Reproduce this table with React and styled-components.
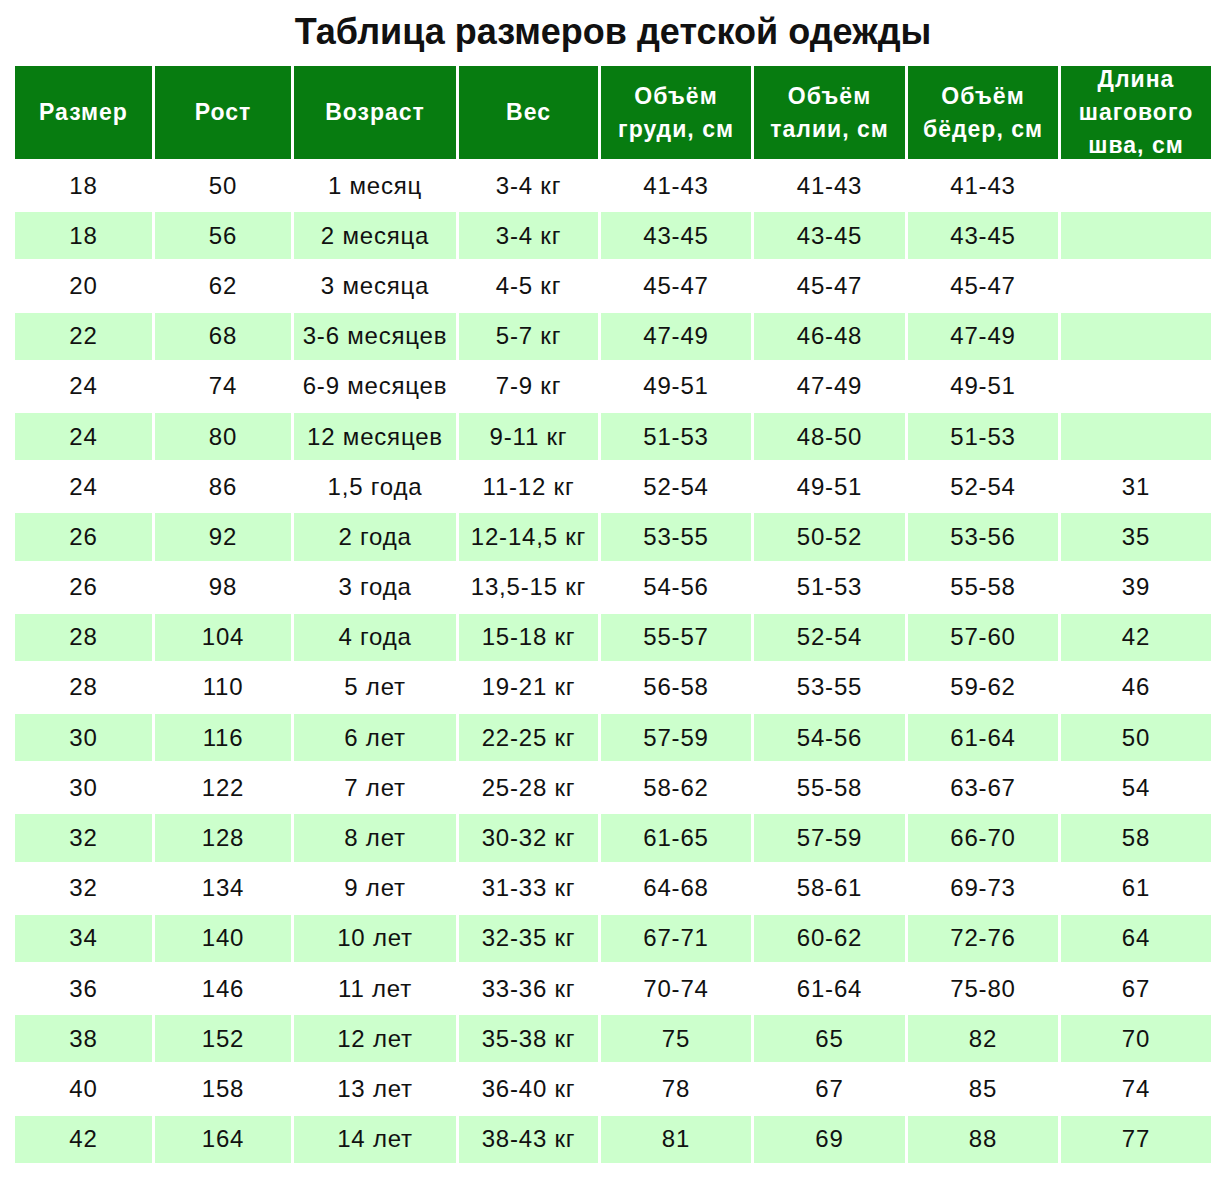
import styled, { createGlobalStyle } from "styled-components";

const GlobalStyle = createGlobalStyle`
    body {
        margin: 0;
        background: #FFFFFF;
        font-family: 'Liberation Sans', Arial, sans-serif;
    }
`;

const headers = [
    "Размер",
    "Рост",
    "Возраст",
    "Вес",
    "Объём\nгруди, см",
    "Объём\nталии, см",
    "Объём\nбёдер, см",
    "Длина\nшагового\nшва, см",
];

const rows = [
    ["18", "50", "1 месяц", "3-4 кг", "41-43", "41-43", "41-43", ""],
    ["18", "56", "2 месяца", "3-4 кг", "43-45", "43-45", "43-45", ""],
    ["20", "62", "3 месяца", "4-5 кг", "45-47", "45-47", "45-47", ""],
    ["22", "68", "3-6 месяцев", "5-7 кг", "47-49", "46-48", "47-49", ""],
    ["24", "74", "6-9 месяцев", "7-9 кг", "49-51", "47-49", "49-51", ""],
    ["24", "80", "12 месяцев", "9-11 кг", "51-53", "48-50", "51-53", ""],
    ["24", "86", "1,5 года", "11-12 кг", "52-54", "49-51", "52-54", "31"],
    ["26", "92", "2 года", "12-14,5 кг", "53-55", "50-52", "53-56", "35"],
    ["26", "98", "3 года", "13,5-15 кг", "54-56", "51-53", "55-58", "39"],
    ["28", "104", "4 года", "15-18 кг", "55-57", "52-54", "57-60", "42"],
    ["28", "110", "5 лет", "19-21 кг", "56-58", "53-55", "59-62", "46"],
    ["30", "116", "6 лет", "22-25 кг", "57-59", "54-56", "61-64", "50"],
    ["30", "122", "7 лет", "25-28 кг", "58-62", "55-58", "63-67", "54"],
    ["32", "128", "8 лет", "30-32 кг", "61-65", "57-59", "66-70", "58"],
    ["32", "134", "9 лет", "31-33 кг", "64-68", "58-61", "69-73", "61"],
    ["34", "140", "10 лет", "32-35 кг", "67-71", "60-62", "72-76", "64"],
    ["36", "146", "11 лет", "33-36 кг", "70-74", "61-64", "75-80", "67"],
    ["38", "152", "12 лет", "35-38 кг", "75", "65", "82", "70"],
    ["40", "158", "13 лет", "36-40 кг", "78", "67", "85", "74"],
    ["42", "164", "14 лет", "38-43 кг", "81", "69", "88", "77"],
];

function App() {
    return (
        <Page>
            <GlobalStyle />
            <Title>Таблица размеров детской одежды</Title>
            <Table>
                {headers.map((h) => (
                    <HeadCell key={h}>{h}</HeadCell>
                ))}
                {rows.map((row, i) =>
                    row.map((value, j) => (
                        <Cell key={`${i}-${j}`} shaded={i % 2 === 1}>
                            {value}
                        </Cell>
                    ))
                )}
            </Table>
        </Page>
    );
}

const Page = styled.div`
    width: 1232px;
    height: 1181px;
    padding: 13px 0 0 15px;
    box-sizing: border-box;
`;

const Title = styled.h1`
    margin: 0;
    width: 1196px;
    height: 53px;
    text-align: center;
    font-family: 'Liberation Sans', Arial, sans-serif;
    font-weight: 700;
    font-size: 36px;
    line-height: 38px;
    color: #111111;
`;

const Table = styled.div`
    display: grid;
    grid-template-columns: 137px 136px 162px 139px 150px 151px 150px 150px;
    grid-template-rows: 93px;
    grid-auto-rows: 47.2px;
    column-gap: 3px;
    row-gap: 3px;
    width: 1196px;
`;

const HeadCell = styled.div`
    display: flex;
    align-items: center;
    justify-content: center;
    text-align: center;
    white-space: pre-line;
    background-color: #077C10;
    color: #FFFFFF;
    font-weight: 700;
    font-size: 23px;
    line-height: 33px;
    letter-spacing: 1px;
    overflow: visible;
`;

const Cell = styled.div`
    display: flex;
    align-items: center;
    justify-content: center;
    background-color: ${(props) => (props.shaded ? "#CCFFCC" : "#FFFFFF")};
    color: #111111;
    font-size: 24px;
    letter-spacing: 0.8px;
    white-space: nowrap;
`;

export default App;
